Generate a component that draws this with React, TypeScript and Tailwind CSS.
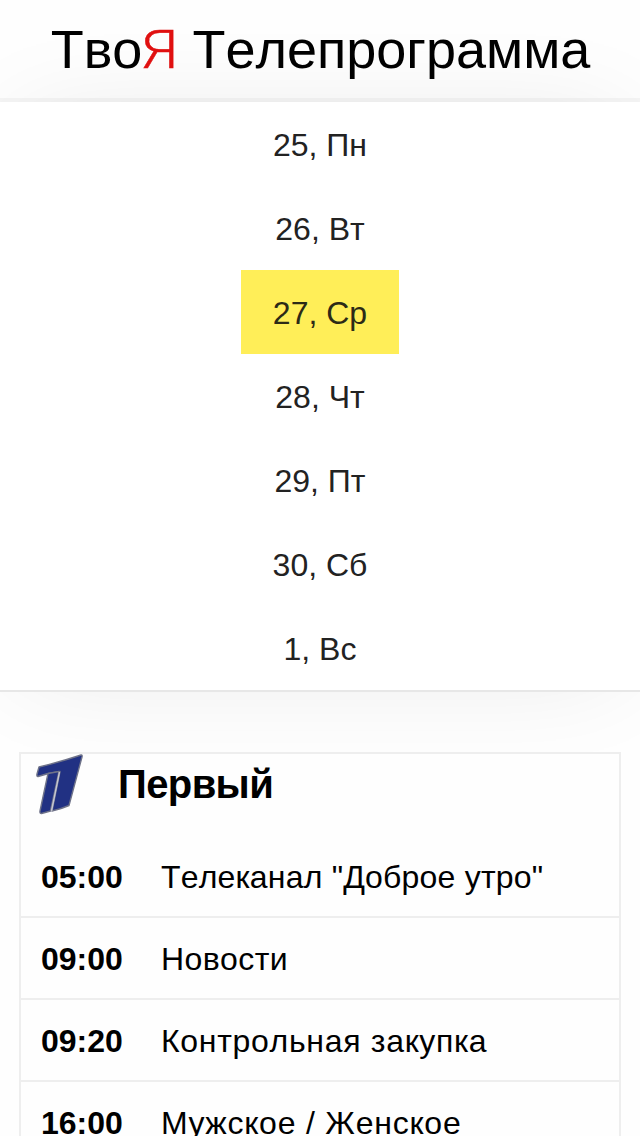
const days = ["25, Пн", "26, Вт", "27, Ср", "28, Чт", "29, Пт", "30, Сб", "1, Вс"];
const activeDay = "27, Ср";

const programmes = [
  { time: "05:00", title: 'Телеканал "Доброе утро"', spacing: "tracking-[0.2px]" },
  { time: "09:00", title: "Новости", spacing: "tracking-[0.4px]" },
  { time: "09:20", title: "Контрольная закупка", spacing: "tracking-[0.7px]" },
  { time: "16:00", title: "Мужское / Женское", spacing: "tracking-[0.8px]" },
];

function ChannelLogo() {
  return (
    <svg className="h-[62px] w-[50px]" viewBox="0 0 50 62" fill="#213183" stroke="#6f7389" strokeWidth="1.4" strokeLinejoin="round">
      <path d="M4 13 Q25 8 46 1 Q47.5 0.500 47 3 L34 51.500 Q26 55 17 57 L25 17.500 Q13 19 3 22.500 Q1.500 22.500 2 20Z" />
      <path d="M13 19.500 24 17.500 15.500 57 6.500 59.500 Q4.500 59.500 5 57Z" />
      <path d="M24.500 18 16.500 57" stroke="#c5c7d2" strokeWidth="1.4" />
    </svg>
  );
}

export default function App() {
  return (
    <div className="flex h-[1136px] flex-col overflow-hidden bg-[#fefefe] font-['Liberation_Sans',Arial,sans-serif] text-black [font-kerning:none]">
      <header className="flex h-[102px] shrink-0 justify-center border-b-4 border-[#f5f5f5]">
        <h1 className="flex whitespace-nowrap pl-px pt-[18px] text-[54px] leading-[62px]">
          <span>Тво</span>
          <span className="-ml-px w-[34px] origin-left scale-x-112 pt-px font-['Roboto'] font-light text-[#e01010] [-webkit-text-stroke:0.5px_#e01010]">Я</span>
          <span className="pl-[17px]">Телепрограмма</span>
        </h1>
      </header>

      <nav className="flex h-[590px] shrink-0 flex-col items-center border-b-2 border-[#e7e7e7] bg-white shadow-[0_0_100px_-20px_rgba(0,0,0,0.09)]">
        {days.map((day) => (
          <a
            key={day}
            className={
              day === activeDay
                ? "h-[84px] bg-[#ffee58] px-8 pt-px text-[32px] leading-[84px] text-[#2c2a16]"
                : "h-[84px] px-8 pt-px text-[32px] leading-[84px] text-[#222222]"
            }
          >
            {day}
          </a>
        ))}
      </nav>

      <main className="flex-1 px-[19px] pt-[60px]">
        <section className="h-[420px] border-2 border-[#eeeeee] bg-[#fefefe]">
          <div className="flex h-[82px] items-start pl-[14px]">
            <ChannelLogo />
            <h2 className="ml-[33px] pt-[7px] text-[40px] font-bold leading-[46px] tracking-[-0.6px]">Первый</h2>
          </div>
          <ul>
            {programmes.map(({ time, title, spacing }) => (
              <li key={time} className="flex h-[82px] whitespace-nowrap border-b-2 border-[#eeeeee] pl-5 text-[32px] leading-[82px]">
                <b className="w-[120px]">{time}</b>
                <span className={spacing}>{title}</span>
              </li>
            ))}
          </ul>
        </section>
      </main>
    </div>
  );
}
